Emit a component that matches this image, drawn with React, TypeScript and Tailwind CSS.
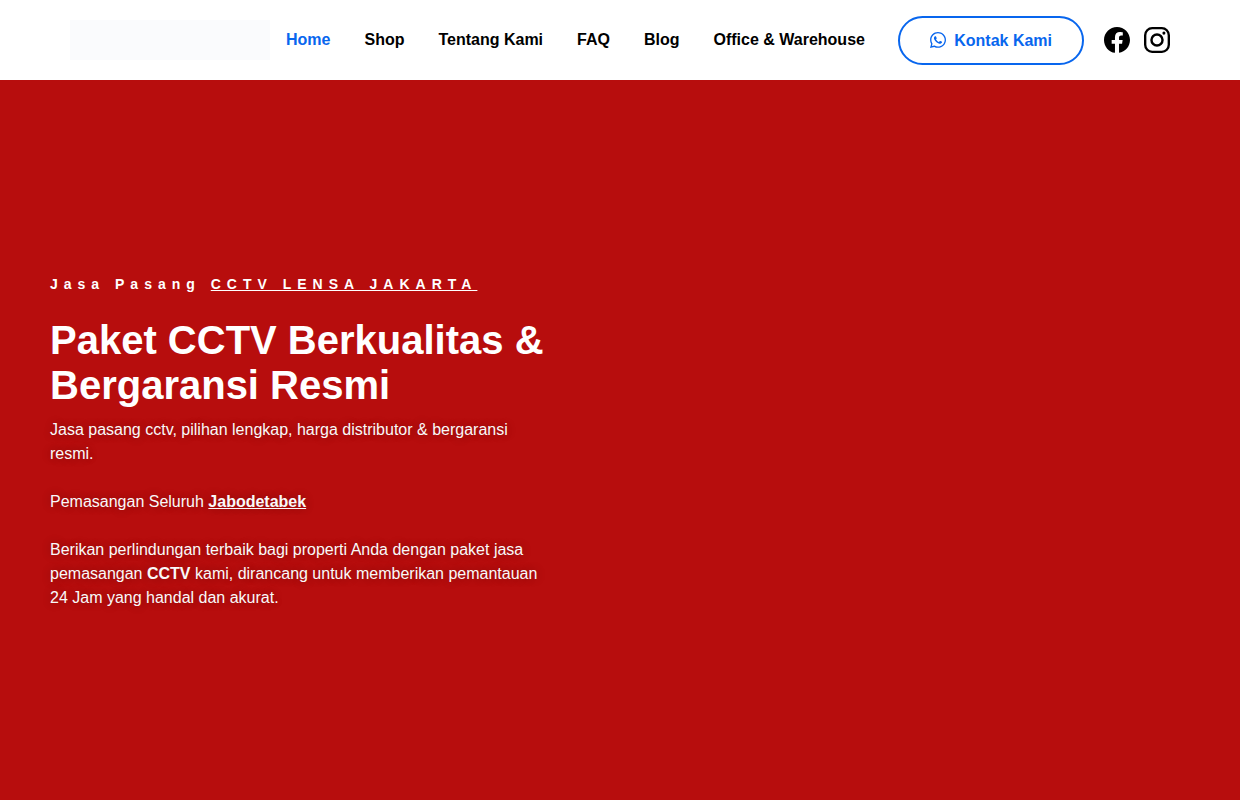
import { FaWhatsapp } from 'react-icons/fa'

const links = ['Shop', 'Tentang Kami', 'FAQ', 'Blog', 'Office & Warehouse']

function FacebookIcon() {
  return (
    <svg viewBox="0 0 32 32" className="size-[26px]" fill="currentColor" aria-hidden="true">
      <path d="M31.997 15.999c0-8.836-7.163-15.999-15.999-15.999s-15.999 7.163-15.999 15.999c0 7.985 5.851 14.604 13.499 15.804v-11.18h-4.062v-4.625h4.062v-3.525c0-4.01 2.389-6.225 6.043-6.225 1.75 0 3.581 0.313 3.581 0.313v3.937h-2.017c-1.987 0-2.607 1.233-2.607 2.498v3.001h4.437l-0.709 4.625h-3.728v11.18c7.649-1.2 13.499-7.819 13.499-15.804z" />
    </svg>
  )
}

function InstagramIcon() {
  return (
    <svg viewBox="0 0 32 32" className="size-[26px]" fill="none" stroke="currentColor" aria-hidden="true">
      <rect x="1.45" y="1.45" width="29.1" height="29.1" rx="8.6" strokeWidth="2.9" />
      <circle cx="16" cy="16" r="6.8" strokeWidth="3" />
      <circle cx="24.5" cy="7.5" r="1.9" fill="currentColor" stroke="none" />
    </svg>
  )
}

function Header() {
  return (
    <header className="flex min-h-20 items-center justify-between bg-white px-[70px] text-black">
      <div className="flex items-center gap-4">
        <a href="#" aria-label="CCTV Lensa Jakarta" className="h-10 w-[200px] shrink-0 bg-[#fafbfd]" />
        <nav className="flex items-center gap-[34px] whitespace-nowrap font-bold">
          <a href="#" className="text-[#0866ee]">
            Home
          </a>
          {links.map((link) => (
            <a key={link} href="#">
              {link}
            </a>
          ))}
        </nav>
      </div>

      <div className="flex shrink-0 items-center gap-5">
        <a
          href="#"
          className="flex items-start gap-2 rounded-full border-2 border-[#0866ee] px-[30px] pt-[11px] pb-[10px] font-bold text-[#0866ee]"
        >
          <FaWhatsapp className="h-[22px] w-4" />
          Kontak Kami
        </a>
        <div className="flex items-center gap-[14px]">
          <a href="#" aria-label="Facebook">
            <FacebookIcon />
          </a>
          <a href="#" aria-label="Instagram">
            <InstagramIcon />
          </a>
        </div>
      </div>
    </header>
  )
}

export default function App() {
  return (
    <div className="flex min-h-screen flex-col font-['Liberation_Sans',Arial,sans-serif] text-base">
      <Header />
      <main className="flex flex-1 flex-col justify-center bg-[#b70d0d] px-[50px] text-white">
        <p className="text-sm leading-7 font-bold tracking-[6px]">
          Jasa Pasang{' '}
          <a href="#" className="underline">
            CCTV LENSA JAKARTA
          </a>
        </p>
        <h1 className="mt-5 max-w-[500px] text-[40px] leading-[45px] font-bold">
          Paket CCTV Berkualitas & Bergaransi Resmi
        </h1>
        <div className="mt-[10px] flex max-w-[500px] flex-col gap-6 leading-6 text-[#f9f9f9] [text-shadow:0_0_10px_rgba(0,0,0,0.3)]">
          <p>Jasa pasang cctv, pilihan lengkap, harga distributor & bergaransi resmi.</p>
          <p>
            Pemasangan Seluruh{' '}
            <a href="#" className="font-bold underline">
              Jabodetabek
            </a>
          </p>
          <p>
            Berikan perlindungan terbaik bagi properti Anda dengan paket jasa pemasangan{' '}
            <strong>CCTV</strong> kami, dirancang untuk memberikan pemantauan 24 Jam yang handal dan
            akurat.
          </p>
        </div>
      </main>
    </div>
  )
}
